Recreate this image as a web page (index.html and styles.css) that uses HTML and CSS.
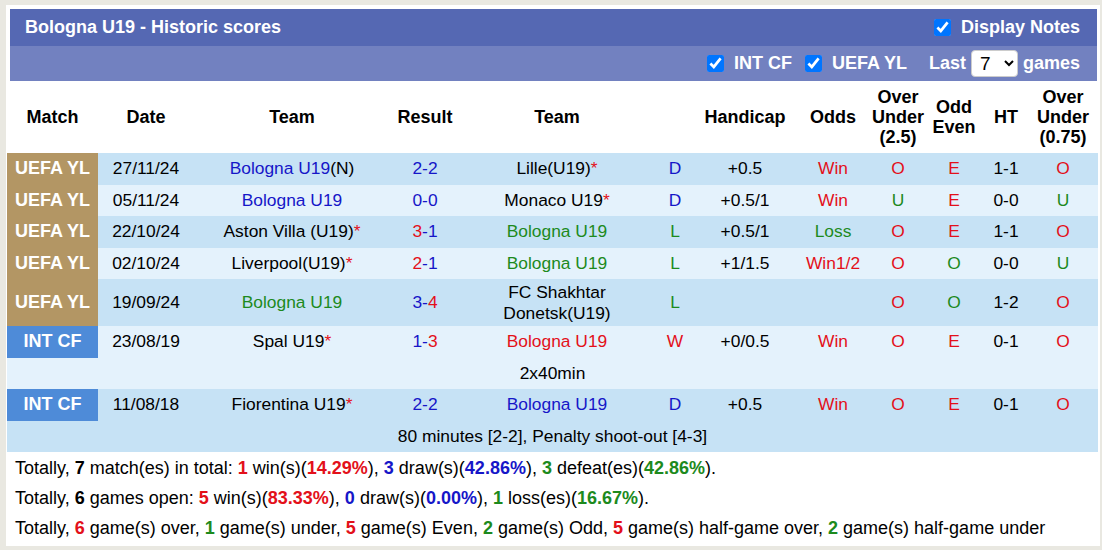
FILE: index.html
```html
<!DOCTYPE html>
<html>
<head>
<meta charset="utf-8">
<link rel="stylesheet" href="styles.css">
</head>
<body>
<div class="box">
  <div class="titlebar">
    <span class="title">Bologna U19 - Historic scores</span>
    <label class="opt"><input type="checkbox" checked> Display Notes</label>
  </div>
  <div class="filterbar">
    <label class="opt"><input type="checkbox" checked> INT CF</label>
    <label class="opt"><input type="checkbox" checked> UEFA YL</label>
    <span class="last">Last <select class="sel"><option>7</option></select> games</span>
  </div>
  <table class="scores">
    <colgroup>
      <col style="width:91px"><col style="width:96px"><col style="width:196px"><col style="width:70px"><col style="width:194px"><col style="width:42px"><col style="width:98px"><col style="width:78px"><col style="width:52px"><col style="width:60px"><col style="width:44px"><col style="width:70px">
    </colgroup>
    <thead>
      <tr>
        <th>Match</th><th>Date</th><th>Team</th><th>Result</th><th>Team</th><th></th><th>Handicap</th><th>Odds</th><th>Over<br>Under<br>(2.5)</th><th>Odd<br>Even</th><th>HT</th><th>Over<br>Under<br>(0.75)</th>
      </tr>
    </thead>
    <tbody>
      <tr class="dark">
        <td class="lg yl">UEFA YL</td><td>27/11/24</td><td><span class="b">Bologna U19</span>(N)</td><td class="b">2-2</td><td>Lille(U19)<span class="r">*</span></td><td class="b">D</td><td>+0.5</td><td class="r">Win</td><td class="r">O</td><td class="r">E</td><td>1-1</td><td class="r">O</td>
      </tr>
      <tr class="light">
        <td class="lg yl">UEFA YL</td><td>05/11/24</td><td class="b">Bologna U19</td><td class="b">0-0</td><td>Monaco U19<span class="r">*</span></td><td class="b">D</td><td>+0.5/1</td><td class="r">Win</td><td class="g">U</td><td class="r">E</td><td>0-0</td><td class="g">U</td>
      </tr>
      <tr class="dark">
        <td class="lg yl">UEFA YL</td><td>22/10/24</td><td>Aston Villa (U19)<span class="r">*</span></td><td><span class="r">3</span><span class="b">-1</span></td><td class="g">Bologna U19</td><td class="g">L</td><td>+0.5/1</td><td class="g">Loss</td><td class="r">O</td><td class="r">E</td><td>1-1</td><td class="r">O</td>
      </tr>
      <tr class="light">
        <td class="lg yl">UEFA YL</td><td>02/10/24</td><td>Liverpool(U19)<span class="r">*</span></td><td><span class="r">2</span><span class="b">-1</span></td><td class="g">Bologna U19</td><td class="g">L</td><td>+1/1.5</td><td class="r">Win1/2</td><td class="r">O</td><td class="g">O</td><td>0-0</td><td class="g">U</td>
      </tr>
      <tr class="dark tall">
        <td class="lg yl">UEFA YL</td><td>19/09/24</td><td class="g">Bologna U19</td><td><span class="b">3-</span><span class="r">4</span></td><td class="two">FC Shakhtar<br>Donetsk(U19)</td><td class="g">L</td><td></td><td></td><td class="r">O</td><td class="g">O</td><td>1-2</td><td class="r">O</td>
      </tr>
      <tr class="light">
        <td class="lg cf">INT CF</td><td>23/08/19</td><td>Spal U19<span class="r">*</span></td><td><span class="b">1-</span><span class="r">3</span></td><td class="r">Bologna U19</td><td class="r">W</td><td>+0/0.5</td><td class="r">Win</td><td class="r">O</td><td class="r">E</td><td>0-1</td><td class="r">O</td>
      </tr>
      <tr class="light">
        <td colspan="12" class="note">2x40min</td>
      </tr>
      <tr class="dark">
        <td class="lg cf">INT CF</td><td>11/08/18</td><td>Fiorentina U19<span class="r">*</span></td><td class="b">2-2</td><td class="b">Bologna U19</td><td class="b">D</td><td>+0.5</td><td class="r">Win</td><td class="r">O</td><td class="r">E</td><td>0-1</td><td class="r">O</td>
      </tr>
      <tr class="dark">
        <td colspan="12" class="note">80 minutes [2-2], Penalty shoot-out [4-3]</td>
      </tr>
    </tbody>
  </table>
  <div class="summary">
    <p>Totally, <strong>7</strong> match(es) in total: <strong class="r">1</strong> win(s)(<strong class="r">14.29%</strong>), <strong class="b">3</strong> draw(s)(<strong class="b">42.86%</strong>), <strong class="g">3</strong> defeat(es)(<strong class="g">42.86%</strong>).</p>
    <p>Totally, <strong>6</strong> games open: <strong class="r">5</strong> win(s)(<strong class="r">83.33%</strong>), <strong class="b">0</strong> draw(s)(<strong class="b">0.00%</strong>), <strong class="g">1</strong> loss(es)(<strong class="g">16.67%</strong>).</p>
    <p>Totally, <strong class="r">6</strong> game(s) over, <strong class="g">1</strong> game(s) under, <strong class="r">5</strong> game(s) Even, <strong class="g">2</strong> game(s) Odd, <strong class="r">5</strong> game(s) half-game over, <strong class="g">2</strong> game(s) half-game under</p>
  </div>
</div>
</body>
</html>
```

FILE: styles.css
```css
html, body {
  margin: 0;
  padding: 0;
  background: #e9e8e1;
}
body {
  padding: 5px 2px 0 6px;
  font-family: "Liberation Sans", Arial, sans-serif;
  font-size: 17px;
  color: #000;
}
.box {
  width: 1094px;
  height: 541px;
  background: #fff;
  box-sizing: border-box;
  padding-top: 4px;
}
.titlebar {
  margin: 0 3px 0 4px;
  height: 37px;
  background: #5568b3;
  color: #fff;
  display: flex;
  align-items: center;
  justify-content: space-between;
  padding: 0 17px 0 15px;
  font-weight: bold;
  font-size: 18px;
}
.filterbar {
  margin: 0 3px 0 4px;
  height: 35px;
  background: #7281c0;
  color: #fff;
  display: flex;
  align-items: center;
  justify-content: flex-end;
  padding: 0 17px 0 15px;
  font-weight: bold;
  font-size: 18px;
  gap: 13px;
}
.opt {
  display: flex;
  align-items: center;
  gap: 10px;
}
.opt input {
  margin: 0;
  width: 17px;
  height: 17px;
}
.last {
  display: flex;
  align-items: center;
  gap: 5px;
  margin-left: 9px;
}
.sel {
  height: 27px;
  width: 47px;
  font-size: 19px;
  font-family: "Liberation Sans", Arial, sans-serif;
  border: 1px solid #ccc;
  border-radius: 4px;
  background: #fff;
  color: #000;
  padding: 0 0 0 4px;
}
.scores {
  margin-left: 1px;
  width: 1091px;
  border-collapse: collapse;
  table-layout: fixed;
}
.scores th {
  height: 72px;
  padding: 0;
  font-weight: bold;
  font-size: 18px;
  line-height: 20px;
  text-align: center;
  vertical-align: middle;
}
.scores td {
  height: 31.5px;
  padding: 0;
  text-align: center;
  vertical-align: middle;
  white-space: nowrap;
  font-size: 17.4px;
}
.scores tr.tall td {
  height: 47px;
}
.scores td.two {
  white-space: normal;
  line-height: 21px;
}
.dark { background: #c6e2f5; }
.light { background: #e4f2fc; }
.scores td.lg {
  color: #fff;
  font-weight: bold;
  font-size: 18px;
}
.yl { background: #b39664; }
.cf { background: #4e8bd8; }
.note { text-align: center; }
.b { color: #1616c8; }
.r { color: #e3101a; }
.g { color: #1d8a1d; }
.summary {
  padding: 1px 0 0 9px;
  font-size: 18px;
}
.summary p {
  margin: 0;
  line-height: 30px;
}
```
